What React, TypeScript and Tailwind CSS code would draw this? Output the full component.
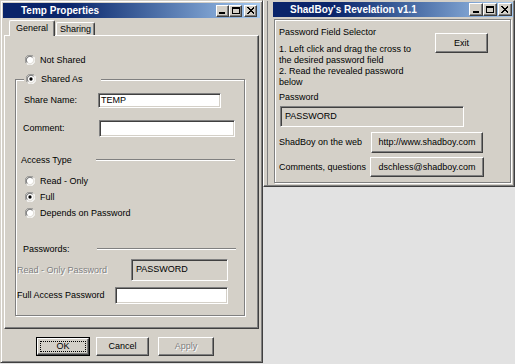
import React from 'react'

// Win2000-ish bevels
const raised =
  'border border-t-white border-l-white border-r-[#404040] border-b-[#404040] shadow-[inset_-1px_-1px_0_#808080]'
const sunken =
  'border border-t-[#808080] border-l-[#808080] border-r-white border-b-white shadow-[inset_1px_1px_0_#404040,inset_-1px_-1px_0_#d4d0c8]'
const etched = 'border border-[#808080] shadow-[inset_1px_1px_0_#fff,1px_1px_0_#fff]'
const disabled = 'text-[#808080] [text-shadow:1px_1px_0_#fff]'

function Radio({ checked }: { checked?: boolean }) {
  return (
    <svg width="10" height="10" viewBox="0 0 12 12" className="shrink-0">
      <circle cx="6" cy="6" r="5.5" fill="#fff" />
      <path d="M1.8 10.2A5.5 5.5 0 0 1 10.2 1.8" stroke="#808080" fill="none" />
      <path d="M10.2 1.8A5.5 5.5 0 0 1 1.8 10.2" stroke="#fff" fill="none" />
      <path d="M2.8 9.2A4.5 4.5 0 0 1 9.2 2.8" stroke="#404040" fill="none" />
      <path d="M9.2 2.8A4.5 4.5 0 0 1 2.8 9.2" stroke="#d4d0c8" fill="none" />
      {checked && <circle cx="6" cy="6" r="2" fill="#000" />}
    </svg>
  )
}

function EtchLine({ className = '' }: { className?: string }) {
  return <div className={`h-[2px] border-t border-t-[#808080] bg-white ${className}`} />
}

function CapBtn({ kind, size }: { kind: 'min' | 'max' | 'close'; size: string }) {
  return (
    <div className={`${size} bg-[#d4d0c8] ${raised} flex items-center justify-center`}>
      {kind === 'min' && <div className="w-[6px] h-[2px] bg-black self-end mb-[2px] -ml-[1px]" />}
      {kind === 'max' && <div className="w-[8px] h-[7px] border border-black border-t-2" />}
      {kind === 'close' && (
        <svg width="8" height="7" viewBox="0 0 8 7" shapeRendering="crispEdges">
          <path d="M0.5 0.5L7 6.5M7 0.5L0.5 6.5" stroke="#000" strokeWidth="1.4" />
        </svg>
      )}
    </div>
  )
}

function TitleBar({ title, textPad, btn, gapClose, right }: { title: string; textPad: string; btn: string; gapClose: string; right: string }) {
  return (
    <div className="h-[15px] shrink-0 flex items-center bg-linear-to-r from-[#0a246a] from-25% to-[#a6caf0]">
      <span className={`${textPad} text-white font-bold text-[10px] whitespace-nowrap`}>{title}</span>
      <div className={`ml-auto flex items-center ${right}`}>
        <CapBtn kind="min" size={btn} />
        <CapBtn kind="max" size={btn} />
        <div className={gapClose} />
        <CapBtn kind="close" size={btn} />
      </div>
    </div>
  )
}

function TempProperties() {
  return (
    <div className="w-[263px] h-[363px] shrink-0 flex flex-col bg-[#d4d0c8] p-[2px] border border-t-[#d4d0c8] border-l-[#d4d0c8] border-r-[#404040] border-b-[#404040] shadow-[inset_1px_1px_0_#fff,inset_-1px_-1px_0_#808080]">
      <TitleBar title="Temp Properties" textPad="pl-[18px]" btn="w-[13px] h-[12px]" gapClose="w-[2px]" right="mr-[3px]" />

      {/* tabs */}
      <div className="h-[17px] flex items-end pl-[6px]">
        <div className="relative z-10 -mb-px h-[16px] px-[6px] flex items-center bg-[#d4d0c8] border-t border-l border-r border-t-white border-l-white border-r-[#404040] rounded-t-[2px] shadow-[inset_-1px_0_0_#808080]">
          General
        </div>
        <div className="h-[13px] px-[3px] ml-[1px] flex items-center border-t border-l border-r border-t-white border-l-white border-r-[#404040] rounded-t-[2px] shadow-[inset_-1px_0_0_#808080]">
          Sharing
        </div>
      </div>

      <div className={`mx-[1px] h-[294px] flex flex-col ${raised}`}>
        <div className="mt-[18px] ml-[20px] h-[12px] flex items-center gap-[5px]">
          <Radio />
          <span>Not Shared</span>
        </div>

        <div className={`relative mt-[13px] ml-[10px] w-[230px] h-[237px] flex flex-col ${etched}`}>
          <div className="absolute -top-[7px] left-[8px] w-[77px] h-[12px] pl-[2px] flex items-center gap-[5px] bg-[#d4d0c8]">
            <Radio checked />
            <span>Shared As</span>
          </div>

          <div className="mt-[13px] h-[15px] flex items-center">
            <span className="w-[82px] pl-[8px]">Share Name:</span>
            <div className={`w-[123px] h-[15px] bg-white ${sunken} flex items-center pl-[2px]`}>TEMP</div>
          </div>
          <div className="mt-[12px] h-[17px] flex items-center">
            <span className="w-[83px] pl-[7px]">Comment:</span>
            <div className={`w-[136px] h-[17px] bg-white ${sunken}`} />
          </div>

          <div className="mt-[17px] h-[12px] flex items-center">
            <span className="w-[80px] pl-[5px]">Access Type</span>
            <EtchLine className="w-[139px]" />
          </div>
          <div className="mt-[9px] ml-[9px] h-[12px] flex items-center gap-[5px]">
            <Radio />
            <span>Read - Only</span>
          </div>
          <div className="mt-[4px] ml-[9px] h-[12px] flex items-center gap-[5px]">
            <Radio checked />
            <span>Full</span>
          </div>
          <div className="mt-[4px] ml-[9px] h-[12px] flex items-center gap-[5px]">
            <Radio />
            <span>Depends on Password</span>
          </div>

          <div className="mt-[24px] h-[12px] flex items-center">
            <span className="w-[81px] pl-[7px]">Passwords:</span>
            <EtchLine className="w-[139px]" />
          </div>
          <div className="mt-[4px] h-[22px] flex items-center">
            <span className={`w-[115px] pl-[1px] ${disabled}`}>Read - Only Password</span>
            <div className={`w-[97px] h-[22px] bg-[#d4d0c8] ${sunken} flex items-center pl-[4px] pb-[2px]`}>PASSWORD</div>
          </div>
          <div className="mt-[6px] h-[17px] flex items-center">
            <span className="w-[99px] pl-[1px]">Full Access Password</span>
            <div className={`w-[113px] h-[17px] bg-white ${sunken}`} />
          </div>
        </div>
      </div>

      <div className="mt-[8px] pl-[33px] flex h-[19px]">
        <div className="w-[54px] h-[19px] border border-black flex">
          <div className={`flex-1 flex ${raised}`}>
            <span className="flex-1 m-[2px] border border-dotted border-black flex items-center justify-center">OK</span>
          </div>
        </div>
        <div className={`ml-[6px] w-[53px] h-[19px] ${raised} flex items-center justify-center`}>Cancel</div>
        <div className={`ml-[9px] w-[56px] h-[19px] ${raised} flex items-center justify-center ${disabled}`}>Apply</div>
      </div>
    </div>
  )
}

function Revelation() {
  return (
    <div className="h-[187px] flex flex-col bg-[#d4d0c8] pl-[9px] pt-[1px] pr-[1px] border border-l-white border-t-[#d4d0c8] border-r-[#404040] border-b-[#404040] shadow-[inset_-1px_-1px_0_#808080,inset_3px_0_0_#d4d0c8,inset_4px_0_0_#808080]">
      <TitleBar title="ShadBoy's Revelation v1.1" textPad="pl-[17px]" btn="w-[14px] h-[13px]" gapClose="w-[1px]" right="mr-[1px]" />

      <div className={`mt-[2px] ml-[1px] mr-[2px] h-[164px] flex flex-col pl-[4px] ${etched}`}>
        <div className="mt-[6px] flex items-start">
          <div className="w-[156px] flex flex-col">
            <div className="h-[12px] flex items-center">Password Field Selector</div>
            <div className="mt-[6px] leading-[11px] whitespace-nowrap">
              <div>1. Left click and drag the cross to</div>
              <div>the desired password field</div>
              <div>2. Read the revealed password</div>
              <div>below</div>
            </div>
          </div>
          <div className={`mt-[7px] w-[53px] h-[20px] ${raised} flex items-center justify-center`}>Exit</div>
        </div>

        <div className="mt-[3px] h-[12px] flex items-center">Password</div>
        <div className={`mt-[3px] ml-[1px] w-[184px] h-[21px] bg-[#d4d0c8] ${sunken} flex items-center pl-[4px]`}>PASSWORD</div>

        <div className="mt-[5px] h-[21px] flex items-center">
          <span className="w-[92px]">ShadBoy on the web</span>
          <div className={`w-[112px] h-[21px] ${raised} flex items-center justify-center whitespace-nowrap`}>http://www.shadboy.com</div>
        </div>
        <div className="mt-[4px] h-[20px] flex items-center">
          <span className="w-[91px]">Comments, questions</span>
          <div className={`w-[114px] h-[20px] ${raised} flex items-center justify-center whitespace-nowrap`}>dschless@shadboy.com</div>
        </div>
      </div>
    </div>
  )
}

export default function App() {
  return (
    <div className="flex w-[515px] h-[364px] overflow-hidden bg-[#e2e2e2] font-['Liberation_Sans',Arial,sans-serif] text-[9px] leading-none text-black">
      <TempProperties />
      <div className="flex flex-col w-[252px]">
        <Revelation />
        <div className="flex-1 bg-[#e2e2e2]" />
      </div>
    </div>
  )
}
